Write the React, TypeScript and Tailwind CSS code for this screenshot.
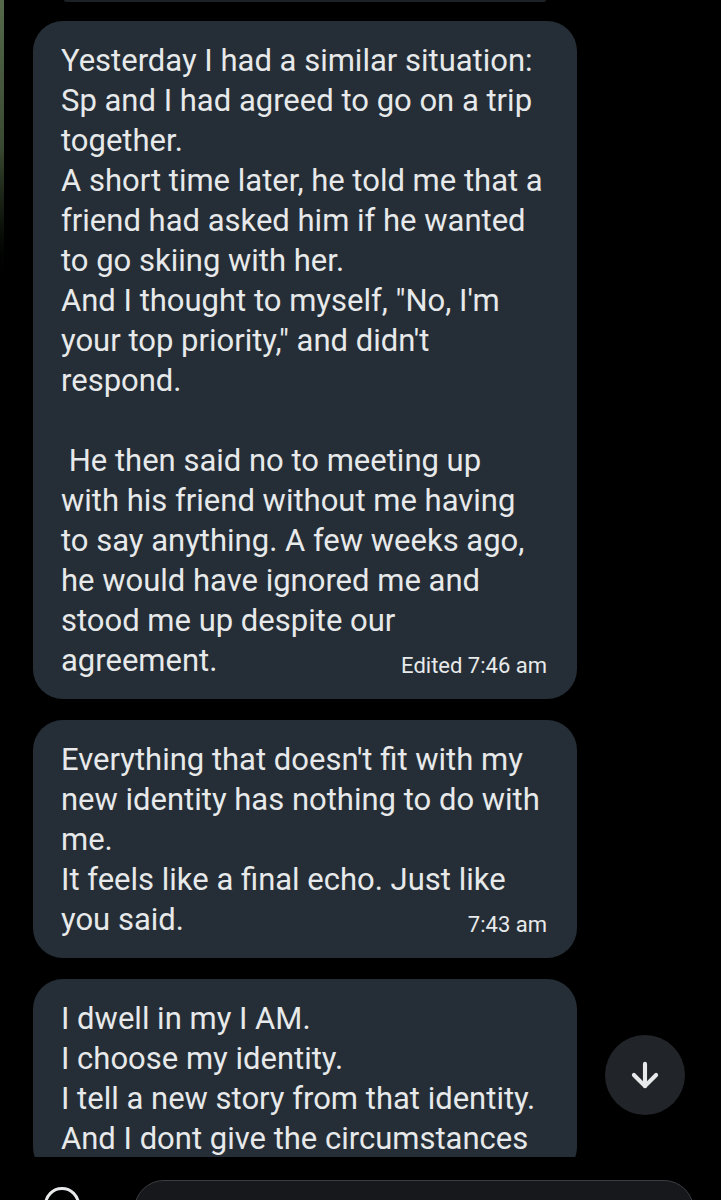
import React from 'react';
import { ArrowDown } from 'lucide-react';

type Message = {
  lines: string[];
  time?: string;
};

const messages: Message[] = [
  {
    lines: [
      'Yesterday I had a similar situation:',
      'Sp and I had agreed to go on a trip',
      'together.',
      'A short time later, he told me that a',
      'friend had asked him if he wanted',
      'to go skiing with her.',
      'And I thought to myself, "No, I\'m',
      'your top priority," and didn\'t',
      'respond.',
      '',
      '\u00a0He then said no to meeting up',
      'with his friend without me having',
      'to say anything. A few weeks ago,',
      'he would have ignored me and',
      'stood me up despite our',
      'agreement.',
    ],
    time: 'Edited 7:46 am',
  },
  {
    lines: [
      "Everything that doesn't fit with my",
      'new identity has nothing to do with',
      'me.',
      'It feels like a final echo. Just like',
      'you said.',
    ],
    time: '7:43 am',
  },
  {
    lines: [
      'I dwell in my I AM.',
      'I choose my identity.',
      'I tell a new story from that identity.',
      'And I dont give the circumstances',
    ],
  },
];

function Bubble({ msg }: { msg: Message }) {
  const last = msg.lines.length - 1;
  return (
    <div className="w-[544px] rounded-[30px] bg-[#252e36] pl-[28px] pr-[30px] pt-[20px] pb-[18px] text-[#e7e9ea]">
      {msg.lines.map((line, i) =>
        i === last && msg.time ? (
          <div key={i} className="flex h-[40px] items-end justify-between leading-[40px]">
            <span className="text-[31px]">{line}</span>
            <span className="pb-[1px] text-[22px] leading-[28px] text-[#e7e9ea]">{msg.time}</span>
          </div>
        ) : (
          <div key={i} className="h-[40px] whitespace-pre text-[31px] leading-[40px]">
            {line}
          </div>
        )
      )}
    </div>
  );
}

export default function App() {
  return (
    <div
      className="relative h-[1200px] w-full overflow-hidden bg-black"
      style={{ fontFamily: 'Roboto, "Noto Sans", sans-serif' }}
    >
      {/* left edge wallpaper sliver */}
      <div className="absolute left-0 top-0 h-[290px] w-[4px] bg-gradient-to-b from-[#55694a] via-[#3a4a32] to-black" />

      <div className="h-[1157px] overflow-hidden pl-[33px]">
        <div className="ml-[31px] h-[2px] w-[482px] rounded-b bg-[#1c2126]" />
        <div className="mt-[19px] flex flex-col gap-[21px]">
          {messages.map((m, i) => (
            <Bubble key={i} msg={m} />
          ))}
        </div>
      </div>

      {/* scroll to bottom */}
      <div className="absolute left-[605px] top-[1035px] flex h-[80px] w-[80px] items-center justify-center rounded-full bg-[#212428]">
        <ArrowDown size={38} strokeWidth={2.6} color="#e7e9ea" />
      </div>

      {/* composer */}
      <div className="absolute left-[44px] top-[1187px] h-[36px] w-[36px] rounded-full border-[3px] border-[#e7e9ea]" />
      <div className="absolute left-[134px] top-[1180px] h-[60px] w-[560px] rounded-[30px] border border-[#3a3e42] bg-[#16181b]" />
    </div>
  );
}
